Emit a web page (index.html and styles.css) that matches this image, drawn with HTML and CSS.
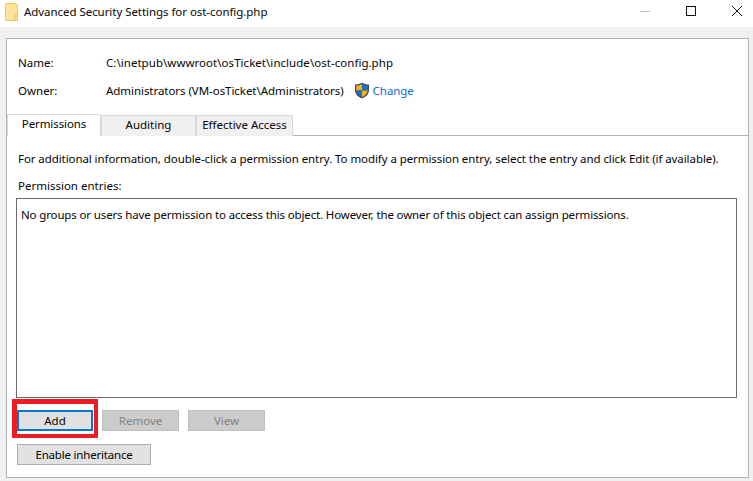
FILE: index.html
```html
<!DOCTYPE html>
<html lang="en">
<head>
<meta charset="utf-8">
<title>Advanced Security Settings</title>
<link rel="stylesheet" href="styles.css">
</head>
<body>
<div class="window">
  <header class="titlebar">
    <svg class="folder" width="14" height="18" viewBox="0 0 14 18">
      <path d="M.5 1.500 Q.5 .5 1.500 .5 H10 Q12 .5 12.500 2 V17.500 H1.500 Q.5 17.500 .5 16.500 Z" fill="#fbe49a" stroke="#eec65a"/>
      <path d="M10 17 V11.500 H12.500" fill="#f6d67c" stroke="#eec65a"/>
    </svg>
    <span class="title">Advanced Security Settings for ost-config.php</span>
    <div class="controls">
      <svg class="ctl" width="46" height="27" viewBox="0 0 46 27"><path d="M18 11.500 H28" stroke="#c4c4c4"/></svg>
      <svg class="ctl" width="46" height="27" viewBox="0 0 46 27"><rect x="18.500" y="6.500" width="9" height="9" fill="none" stroke="#111"/></svg>
      <svg class="ctl" width="39" height="27" viewBox="0 0 39 27"><path d="M18 6 L28 16 M28 6 L18 16" stroke="#111" fill="none"/></svg>
    </div>
  </header>
  <main class="panel">
    <div class="info">
      <div class="row"><span class="label">Name:</span><span class="path">C:\inetpub\wwwroot\osTicket\include\ost-config.php</span></div>
      <div class="row"><span class="label">Owner:</span><span class="owner">Administrators (VM-osTicket\Administrators)</span>
        <svg class="shield" width="16" height="17" viewBox="0 0 16 17">
          <path d="M8 .5 C6 2 3.500 2.500 1 2.500 V8 C1 12 4 15 8 16.500 C12 15 15 12 15 8 V2.500 C12.500 2.500 10 2 8 .5 Z" fill="#3c4a5c"/>
          <path d="M8 2 V8.500 H2.200 V3.600 C4.300 3.500 6.300 3 8 2 Z" fill="#f2b01e"/>
          <path d="M8 2 V8.500 H13.800 V3.600 C11.700 3.500 9.700 3 8 2 Z" fill="#1c6fc8"/>
          <path d="M2.300 8.500 H8 V15 C5 13.800 2.500 11.500 2.300 8.500 Z" fill="#1c6fc8"/>
          <path d="M13.700 8.500 H8 V15 C11 13.800 13.500 11.500 13.700 8.500 Z" fill="#f2b01e"/>
        </svg>
        <a class="link">Change</a></div>
    </div>
    <nav class="tabs">
      <div class="tab active">Permissions</div>
      <div class="tab">Auditing</div>
      <div class="tab third">Effective Access</div>
    </nav>
    <section class="content">
      <p class="help">For additional information, double-click a permission entry. To modify a permission entry, select the entry and click Edit (if available).</p>
      <p class="entries-label">Permission entries:</p>
      <div class="listbox">No groups or users have permission to access this object. However, the owner of this object can assign permissions.</div>
      <div class="buttons">
        <div class="btn focus">Add<span class="highlight"></span></div>
        <div class="btn disabled">Remove</div>
        <div class="btn disabled">View</div>
      </div>
      <div class="btn wide">Enable inheritance</div>
    </section>
  </main>
</div>
</body>
</html>
```
FILE: styles.css
```css
* { box-sizing: border-box; }
html, body { margin: 0; padding: 0; }
body {
  width: 753px;
  height: 481px;
  overflow: hidden;
  background: #f0f0f0;
  color: #050505;
  font: 11.5px/16px "Noto Sans", "Open Sans", sans-serif;
}
.window { display: flex; flex-direction: column; height: 481px; }
.titlebar {
  display: flex;
  align-items: center;
  height: 27px;
  background: #fff;
  padding-left: 5px;
}
.folder { margin-right: 5px; margin-top: -3px; }
.title { margin-top: -3px; letter-spacing: -0.05px; }
.controls { display: flex; margin-left: auto; }
.ctl { display: block; }
.panel {
  margin: 11px 4px 3px 6px;
  flex: 1;
  background: #fff;
  border: 1px solid #b4b4b4;
  display: flex;
  flex-direction: column;
}
.info { padding: 16px 11px 0; height: 75px; }
.row { display: flex; align-items: center; height: 16px; margin-bottom: 12px; }
.label { width: 88px; }
.path { letter-spacing: 0.04px; }
.owner { letter-spacing: -0.05px; }
.shield { margin: -2px 3px 0 10px; }
.link { color: #0a6cd6; letter-spacing: -0.05px; }
.tabs { display: flex; height: 22px; border-bottom: 1px solid #b4b4b4; }
.tab {
  background: #f0f0f0;
  border: 1px solid #d9d9d9;
  border-bottom: 0;
  height: 21px;
  margin-top: 1px;
  text-align: center;
  line-height: 18px;
  width: 95px;
}
.tab.active {
  background: #fff;
  height: 22px;
  margin-top: 0;
  width: 94px;
  letter-spacing: -0.1px;
}
.tab.third { width: 97px; }
.content { padding: 0 11px 0 9px; flex: 1; display: flex; flex-direction: column; }
.help { margin: 15px 0 0 2px; letter-spacing: -0.08px; }
.entries-label { margin: 11px 0 0 2px; }
.listbox {
  margin-top: 4px;
  height: 200px;
  border: 1px solid #6a6a6a;
  padding: 8px 4px;
  letter-spacing: -0.14px;
}
.buttons { display: flex; gap: 9px; margin: 12px 0 13px 1px; }
.btn {
  width: 77px;
  height: 21px;
  border: 1px solid #adadad;
  background: #e1e1e1;
  text-align: center;
  line-height: 19px;
  position: relative;
}
.btn.focus { width: 76px; border: 2px solid #0078d7; line-height: 17px; }
.btn.disabled { background: #cccccc; border-color: #bfbfbf; color: #838383; }
.btn.wide { width: 134px; margin-left: 1px; letter-spacing: -0.2px; }
.highlight {
  position: absolute;
  left: -7px;
  top: -13px;
  width: 86px;
  height: 39px;
  border: 4px solid #ed1c24;
  border-top-width: 5px;
  border-left-width: 5px;
}
```
